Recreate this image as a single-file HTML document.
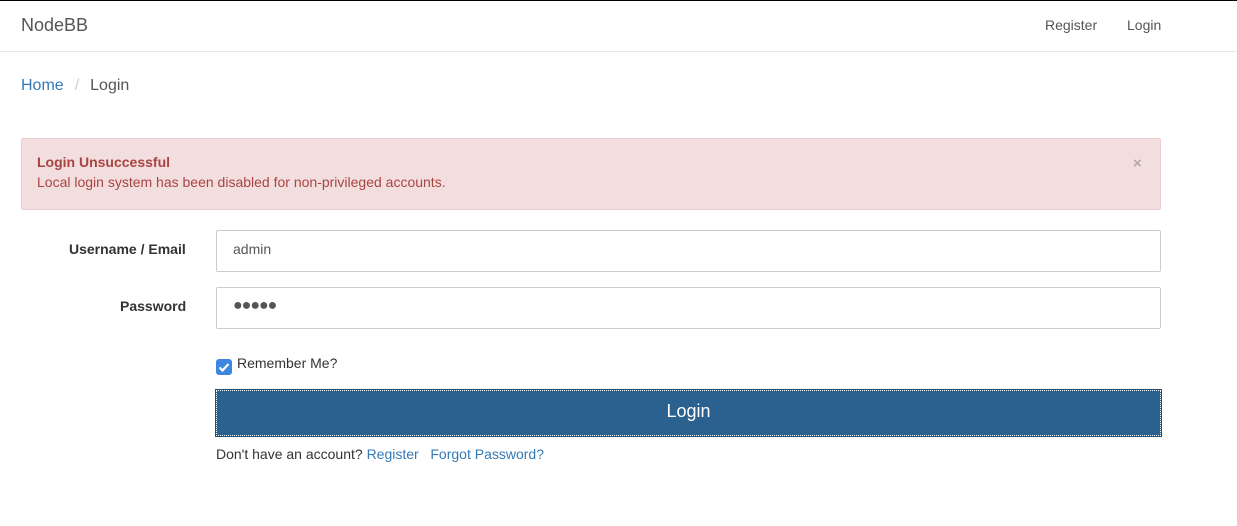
<!DOCTYPE html>
<html><head><style>
body{margin:0;width:1237px;height:526px;background:#fff;font-family:"Liberation Sans",sans-serif;font-size:14px;color:#333;position:relative;overflow:hidden}
.a{position:absolute}
a{color:#337ab7;text-decoration:none}
</style></head><body>
<div class="a" style="left:0;top:0;width:1237px;height:1px;background:#000"></div>
<div class="a" style="left:0;top:51px;width:1237px;height:1px;background:#e7e7e7"></div>
<div class="a" style="left:21px;top:15px;font-size:18px;color:#555">NodeBB</div>
<div class="a" style="left:1045px;top:17px;color:#555">Register</div>
<div class="a" style="left:1127px;top:17px;color:#555">Login</div>
<div class="a" style="left:21px;top:77px;font-size:16px"><a>Home</a><span style="color:#ccc;padding:0 11px">/</span><span style="color:#555">Login</span></div>
<div class="a" style="left:21px;top:138px;width:1138px;height:70px;background:#f2dede;border:1px solid #ebccd1;border-radius:2px"></div>
<div class="a" style="left:37px;top:154px;color:#a94442;font-weight:bold">Login Unsuccessful</div>
<div class="a" style="left:37px;top:174px;color:#a94442">Local login system has been disabled for non-privileged accounts.</div>
<div class="a" style="left:1133px;top:155px;color:#b5a5a5;font-weight:bold;font-size:15px">×</div>
<div class="a" style="left:69px;top:241px;font-weight:bold">Username / Email</div>
<div class="a" style="left:120px;top:298px;font-weight:bold">Password</div>
<div class="a" style="left:216px;top:230px;width:943px;height:40px;border:1px solid #ccc;border-radius:2px"></div>
<div class="a" style="left:233px;top:241px;color:#555">admin</div>
<div class="a" style="left:216px;top:287px;width:943px;height:40px;border:1px solid #ccc;border-radius:2px"></div>
<div class="a" style="left:233px;top:297px;color:#555;font-size:16px;letter-spacing:-1px">●●●●●</div>
<div class="a" style="left:216px;top:359px;width:16px;height:16px;background:#3e87e0;border-radius:3px"><svg width="16" height="16"><path d="M3.5 8.5l3 3 6-6.5" stroke="#fff" stroke-width="2.2" fill="none"/></svg></div>
<div class="a" style="left:237px;top:355px">Remember Me?</div>
<div class="a" style="left:216px;top:390px;width:943px;height:44px;background:#2a618f;border:1px dotted #fff;outline:1px solid #1f4f78;color:#fff;font-size:18px;text-align:center;line-height:41px">Login</div>
<div class="a" style="left:216px;top:446px">Don't have an account? <a>Register</a> &nbsp; <a>Forgot Password?</a></div>
</body></html>
